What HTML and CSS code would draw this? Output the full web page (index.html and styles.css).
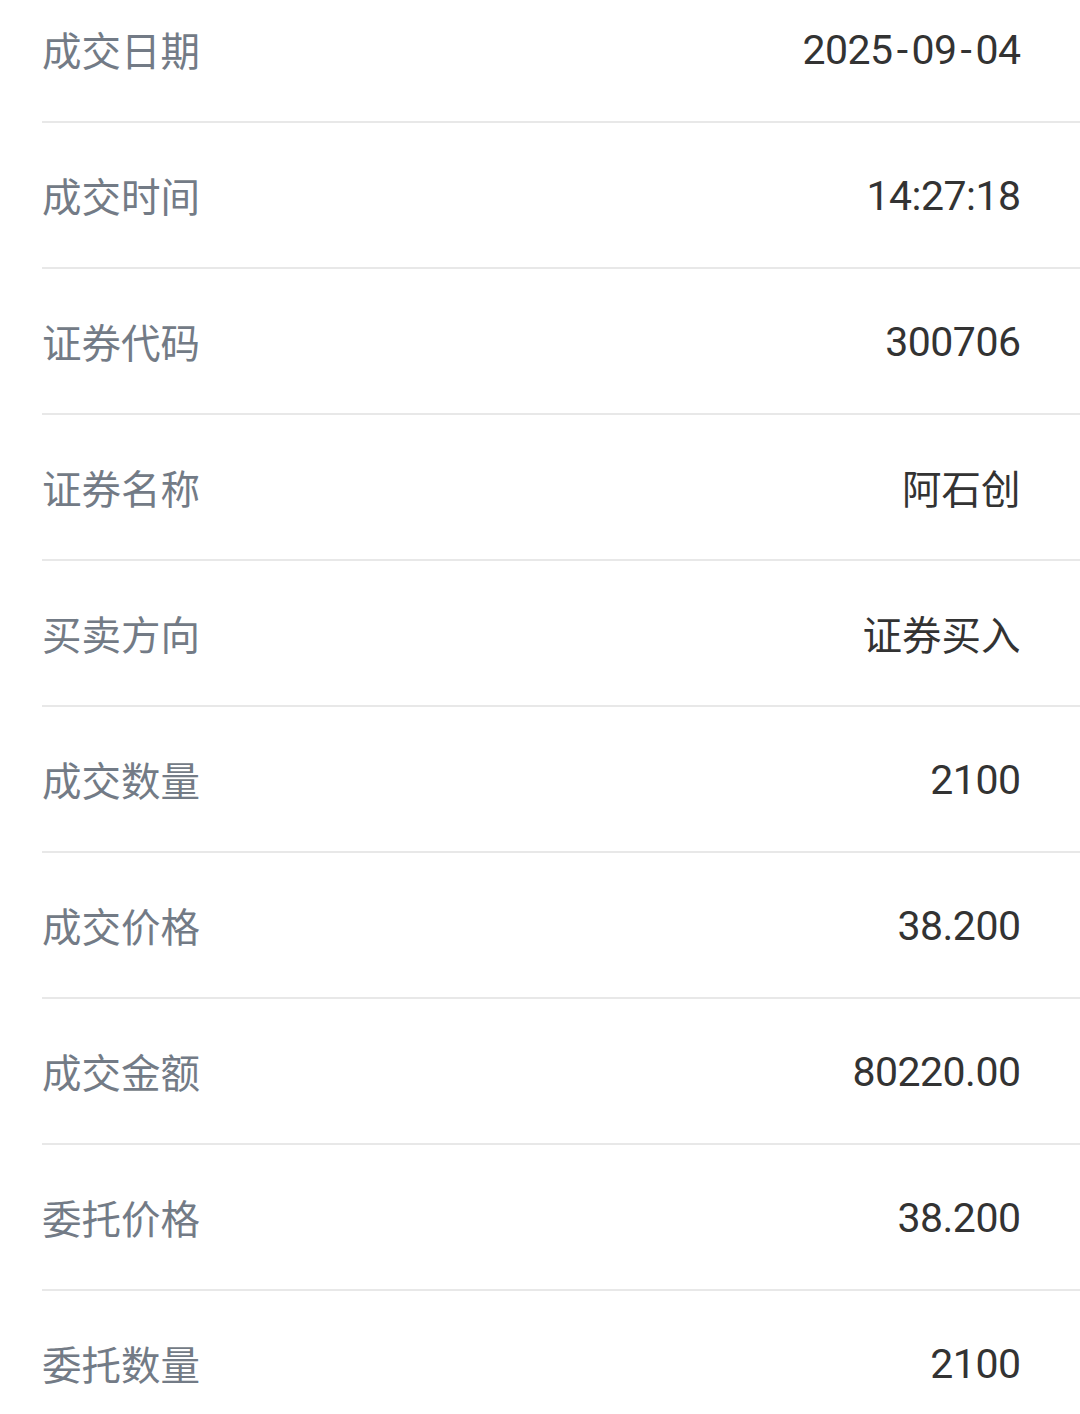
FILE: index.html
```html
<!DOCTYPE html>
<html lang="zh-CN">
<head>
<meta charset="utf-8">
<link rel="stylesheet" href="styles.css">
</head>
<body>
<div class="list">
  <div class="row"><span class="label">成交日期</span><span class="value">2025<span class="sep">-</span>09<span class="sep">-</span>04</span></div>
  <div class="row"><span class="label">成交时间</span><span class="value">14:27:18</span></div>
  <div class="row"><span class="label">证券代码</span><span class="value">300706</span></div>
  <div class="row"><span class="label">证券名称</span><span class="value cjk">阿石创</span></div>
  <div class="row"><span class="label">买卖方向</span><span class="value cjk">证券买入</span></div>
  <div class="row"><span class="label">成交数量</span><span class="value">2100</span></div>
  <div class="row"><span class="label">成交价格</span><span class="value">38.200</span></div>
  <div class="row"><span class="label">成交金额</span><span class="value">80220.00</span></div>
  <div class="row"><span class="label">委托价格</span><span class="value">38.200</span></div>
  <div class="row"><span class="label">委托数量</span><span class="value">2100</span></div>
</div>
</body>
</html>
```
FILE: styles.css
```css
html, body {
  margin: 0;
  padding: 0;
  background: #ffffff;
  overflow: hidden;
}
body {
  font-family: Roboto, "Noto Sans CJK SC", sans-serif;
}
.list {
  margin-top: -23px;
  padding-left: 42px;
}
.row {
  display: flex;
  align-items: center;
  justify-content: space-between;
  height: 144px;
  border-bottom: 2px solid #e8e8e8;
  padding-right: 59.5px;
}
.label {
  font-size: 39.5px;
  color: #737b86;
  padding-bottom: 2px;
}
.value {
  font-size: 41px;
  letter-spacing: -0.5px;
  color: #333333;
  padding-top: 2px;
}
.value.cjk {
  font-size: 39.5px;
  letter-spacing: 0;
  padding-top: 0;
  padding-bottom: 2px;
}
.sep {
  display: inline-block;
  padding: 0 4px;
}
```
